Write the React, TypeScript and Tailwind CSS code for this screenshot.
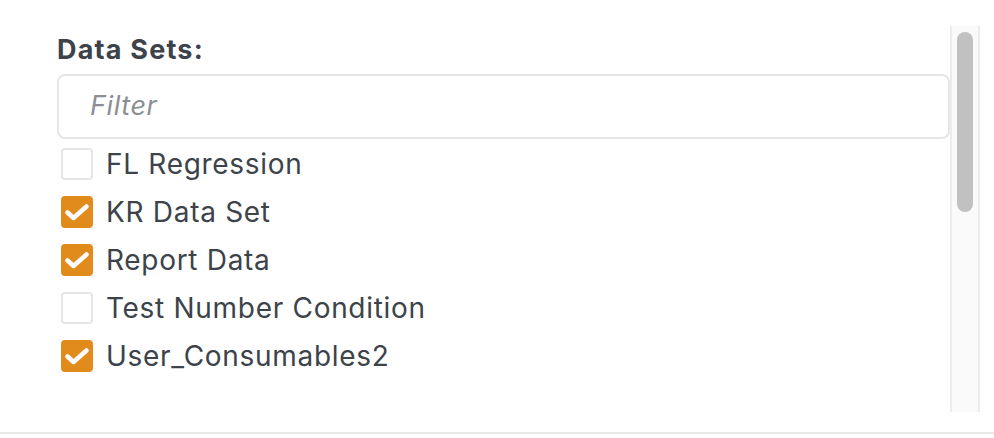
const items = [
  { name: "FL Regression", checked: false },
  { name: "KR Data Set", checked: true },
  { name: "Report Data", checked: true },
  { name: "Test Number Condition", checked: false },
  { name: "User_Consumables2", checked: true },
];

function CheckMark() {
  return (
    <svg viewBox="0 0 32 32" className="w-[32px] h-[32px]" fill="none">
      <path d="M6.5 16.5L12.5 22L25.5 10.5" stroke="white" strokeWidth="4.5" strokeLinecap="round" strokeLinejoin="round" />
    </svg>
  );
}

export default function App() {
  return (
    <div className="w-[994px] h-[438px] bg-white flex flex-col" style={{ fontFamily: "Inter, 'Open Sans', sans-serif" }}>
      <div className="flex-1 flex pt-[26px] pl-[57px] pr-[14px]">
        <div className="flex-1 flex flex-col">
          <h3 className="text-[27px] leading-[30px] font-bold tracking-[1.2px] text-[#3c434a] mt-[9px]">Data Sets:</h3>
          <div className="mt-[9px] h-[65px] border-2 border-[#e6e6e6] rounded-[8px] flex items-center pl-[31px]">
            <span className="italic text-[27px] tracking-[0.6px] text-[#8a8f94]">Filter</span>
          </div>
          <ul className="mt-[1px] flex flex-col">
            {items.map((it) => (
              <li key={it.name} className="h-[48px] flex items-center pl-[4px]">
                {it.checked ? (
                  <span className="w-[32px] h-[32px] rounded-[4px] bg-[#e08b1b] flex items-center justify-center">
                    <CheckMark />
                  </span>
                ) : (
                  <span className="w-[32px] h-[32px] rounded-[4px] border-2 border-[#e6e6e6] bg-white" />
                )}
                <span className="ml-[13px] text-[28px] leading-[34px] tracking-[0.7px] text-[#3c434a]">{it.name}</span>
              </li>
            ))}
          </ul>
        </div>
        <div className="w-[30px] h-[386px] bg-[#fafafa] border-x-2 border-[#ececec] flex flex-col items-center pt-[6px]">
          <div className="w-[16px] h-[180px] rounded-full bg-[#c1c1c1]" />
        </div>
      </div>
      <div className="h-[2px] bg-[#e8e8e8] mb-[4px]" />
    </div>
  );
}
